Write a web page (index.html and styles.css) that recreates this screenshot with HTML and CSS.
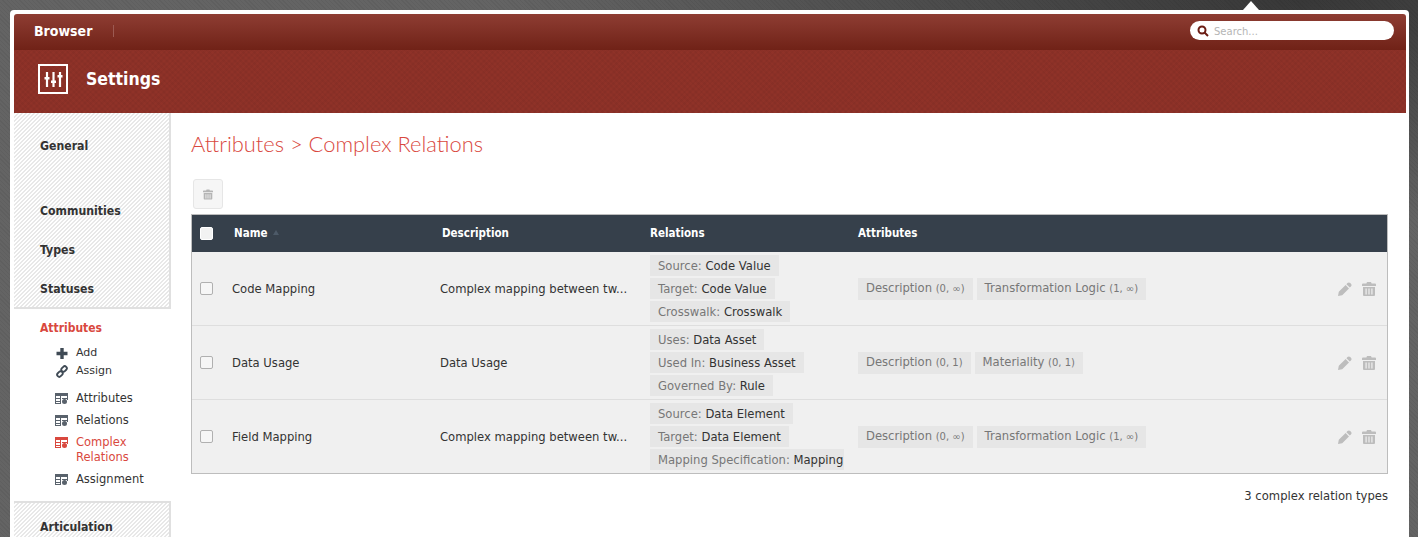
FILE: index.html
```html
<!DOCTYPE html>
<html lang="en">
<head>
<meta charset="utf-8">
<title>Settings</title>
<link rel="stylesheet" href="styles.css">
</head>
<body>
<svg width="0" height="0" class="defs">
  <defs>
    <symbol id="i-trash" viewBox="0 0 14 14"><path d="M5 0h4l.6 1.500H13a1 1 0 0 1 1 1V4H0V2.500a1 1 0 0 1 1-1h3.400zM1 5h12v8a1 1 0 0 1-1 1H2a1 1 0 0 1-1-1zm2.500 1.500v6h1.200v-6zm2.900 0v6h1.200v-6zm2.900 0v6h1.200v-6z"/></symbol>
    <symbol id="i-pencil" viewBox="0 0 14 14"><path d="M0 14l.8-4.200L7.600 3l3.400 3.400L4.200 13.200zM8.400 2.200l1.100-1.100a2 2 0 0 1 2.800 0l.6.600a2 2 0 0 1 0 2.800l-1.100 1.100z"/></symbol>
    <symbol id="i-table" viewBox="0 0 13 11"><path d="M0 0h13v3H0zM0 3h1v8H0zM12 3h1v4h-1zM1 5h4v1H1zM1 8h4v1H1zM1 10h5v1H1zM5 3h1v8H5z"/><path d="M7 5h5v1H7z"/><circle cx="9.500" cy="8.500" r="2.500"/></symbol>
  </defs>
</svg>
<div class="arrow"></div>
<div class="window">
  <header class="topbar">
    <span class="brand">Browser</span>
    <span class="sep"></span>
    <div class="search">
      <svg class="search-icon" viewBox="0 0 12 12"><circle cx="5" cy="5" r="3.500"/><path d="M7.500 7.500L11 11"/></svg>
      <span class="placeholder">Search...</span>
    </div>
  </header>
  <div class="titlebar">
    <div class="logo">
      <svg viewBox="0 0 30 30" width="30" height="30"><rect x="1" y="1" width="28" height="28" class="logo-frame"/><path class="logo-lines" d="M9 8v15M15.500 8v15M22 8v15"/><path class="logo-knobs" d="M6.500 13h5v2.500h-5zM13 16.500h5V19h-5zM19.500 11h5v2.500h-5z"/></svg>
    </div>
    <h1>Settings</h1>
  </div>
  <div class="content">
    <aside class="sidebar">
      <div class="hatched first">
        <a class="sec sec-general">General</a>
        <a class="sec">Communities</a>
        <a class="sec">Types</a>
        <a class="sec">Statuses</a>
      </div>
      <div class="open">
        <a class="sec active">Attributes</a>
        <ul class="actions">
          <li><svg class="act-ic" viewBox="0 0 11 11" width="11" height="11"><path d="M3.800 0h3.400v3.800H11v3.400H7.200V11H3.800V7.200H0V3.800h3.800z"/></svg>Add</li>
          <li><svg class="act-ic chain" viewBox="0 0 13 13" width="13" height="13"><rect x="5.500" y="1.500" width="6.500" height="4.500" rx="2.200" transform="rotate(-45 8.750 3.750)"/><rect x="1" y="7" width="6.500" height="4.500" rx="2.200" transform="rotate(-45 4.250 9.250)"/></svg>Assign</li>
        </ul>
        <ul class="views">
          <li><svg class="tbl"><use href="#i-table"/></svg><span>Attributes</span></li>
          <li><svg class="tbl"><use href="#i-table"/></svg><span>Relations</span></li>
          <li class="cur"><svg class="tbl"><use href="#i-table"/></svg><span>Complex Relations</span></li>
          <li><svg class="tbl"><use href="#i-table"/></svg><span>Assignment</span></li>
        </ul>
      </div>
      <div class="hatched last">
        <a class="sec">Articulation</a>
      </div>
    </aside>
    <main class="main">
      <h2>Attributes &gt; Complex Relations</h2>
      <button class="tool"><svg class="ic"><use href="#i-trash"/></svg></button>
      <table>
        <colgroup>
          <col class="c-check"><col class="c-name"><col class="c-desc"><col class="c-rel"><col class="c-attr"><col class="c-act">
        </colgroup>
        <thead>
          <tr>
            <th class="th-check"><span class="check head"></span></th>
            <th><span class="th-name">Name</span><span class="sort"></span></th>
            <th>Description</th>
            <th>Relations</th>
            <th>Attributes</th>
            <th></th>
          </tr>
        </thead>
        <tbody>
          <tr>
            <td><span class="check"></span></td>
            <td>Code Mapping</td>
            <td>Complex mapping between tw...</td>
            <td class="tags">
              <span class="tag"><i>Source:</i> Code Value</span>
              <span class="tag"><i>Target:</i> Code Value</span>
              <span class="tag"><i>Crosswalk:</i> Crosswalk</span>
            </td>
            <td class="attrs">
              <span class="tag a"><i>Description</i> <small>(0, ∞)</small></span>
              <span class="tag a"><i>Transformation Logic</i> <small>(1, ∞)</small></span>
            </td>
            <td class="acts"><svg class="ic"><use href="#i-pencil"/></svg><svg class="ic"><use href="#i-trash"/></svg></td>
          </tr>
          <tr>
            <td><span class="check"></span></td>
            <td>Data Usage</td>
            <td>Data Usage</td>
            <td class="tags">
              <span class="tag"><i>Uses:</i> Data Asset</span>
              <span class="tag"><i>Used In:</i> Business Asset</span>
              <span class="tag"><i>Governed By:</i> Rule</span>
            </td>
            <td class="attrs">
              <span class="tag a"><i>Description</i> <small>(0, 1)</small></span>
              <span class="tag a"><i>Materiality</i> <small>(0, 1)</small></span>
            </td>
            <td class="acts"><svg class="ic"><use href="#i-pencil"/></svg><svg class="ic"><use href="#i-trash"/></svg></td>
          </tr>
          <tr>
            <td><span class="check"></span></td>
            <td>Field Mapping</td>
            <td>Complex mapping between tw...</td>
            <td class="tags">
              <span class="tag"><i>Source:</i> Data Element</span>
              <span class="tag"><i>Target:</i> Data Element</span>
              <span class="tag"><i>Mapping Specification:</i> Mapping</span>
            </td>
            <td class="attrs">
              <span class="tag a"><i>Description</i> <small>(0, ∞)</small></span>
              <span class="tag a"><i>Transformation Logic</i> <small>(1, ∞)</small></span>
            </td>
            <td class="acts"><svg class="ic"><use href="#i-pencil"/></svg><svg class="ic"><use href="#i-trash"/></svg></td>
          </tr>
        </tbody>
      </table>
      <p class="count">3 complex relation types</p>
    </main>
  </div>
</div>
</body>
</html>
```
FILE: styles.css
```css
* { box-sizing: border-box; }
html, body { height: 100%; }
body {
  margin: 0;
  height: 537px;
  overflow: hidden;
  padding: 10px 9px 0 10px;
  font-family: "DejaVu Sans", sans-serif;
  font-size: 11.6px;
  color: #333;
  background:
    repeating-linear-gradient(45deg, rgba(0,0,0,.05) 0 1px, transparent 1px 3px),
    radial-gradient(ellipse 800px 220px at 1300px 0, #383838, rgba(56,56,56,0)),
    #646464;
  position: relative;
}
.defs { position: absolute; }
.arrow {
  position: absolute;
  left: 1243px;
  top: 1px;
  width: 0;
  height: 0;
  border: 8px solid transparent;
  border-top: 0;
  border-bottom: 9px solid #fff;
}
.window {
  background: #fff;
  border-radius: 4px 4px 0 0;
  padding: 4px 3px 0 4px;
  height: 527px;
  overflow: hidden;
}
.topbar {
  height: 36px;
  display: flex;
  align-items: center;
  padding: 0 12px 3px 20px;
  border-radius: 3px 3px 0 0;
  background: linear-gradient(#8e3d33, #702217);
}
.brand, h1, .sec, thead th {
  font-family: "DejaVu Sans Condensed", "DejaVu Sans", sans-serif;
  font-stretch: condensed;
  font-weight: 700;
}
.brand { color: #fff; font-size: 14px; }
.sep { width: 1px; height: 12px; margin-left: 21px; background: #9c5a52; }
.search {
  margin-left: auto;
  width: 204px;
  height: 19px;
  border-radius: 10px;
  background: #fff;
  display: flex;
  align-items: center;
  padding-left: 7px;
  gap: 5px;
  font-size: 10px;
  color: #b5b5b5;
}
.placeholder { padding-top: 1px; }
.search-icon { width: 12px; height: 12px; fill: none; stroke: #6b1d14; stroke-width: 2; }
.titlebar {
  height: 63px;
  display: flex;
  align-items: center;
  padding: 0 0 6px 24px;
  gap: 18px;
  background: #8f3228;
  background-image: repeating-linear-gradient(45deg, rgba(0,0,0,.03) 0 2px, transparent 2px 4px), repeating-linear-gradient(-45deg, rgba(0,0,0,.03) 0 2px, transparent 2px 4px);
}
.logo { width: 30px; height: 30px; }
.logo-frame { fill: none; stroke: #fff; stroke-width: 2; }
.logo-lines { stroke: #fff; stroke-width: 2.200; fill: none; }
.logo-knobs { fill: #fff; }
h1 { margin: 0; color: #fff; font-size: 17.500px; }
.content { display: flex; }
.sidebar { width: 157px; flex: none; }
.hatched {
  background-color: #fff;
  background-image: repeating-linear-gradient(135deg, #e8e8e8 0 1.200px, #fff 1.200px 2.8284px);
  border-right: 2px solid #e0e0e0;
}
.hatched.first { height: 196px; border-bottom: 2px solid #e0e0e0; padding-top: 20px; }
.hatched.last { height: 60px; border-top: 2px solid #e0e0e0; padding-top: 11px; }
.sec { display: block; height: 39px; padding: 6px 0 0 26px; color: #333; font-size: 12.200px; }
.sec-general { height: 65px; }
.open { height: 192px; }
.sec.active { color: #d9483e; height: 28px; padding-top: 12px; font-size: 12px; }
ul { list-style: none; margin: 0; }
.actions { padding: 7px 0 0 42px; }
.actions li { height: 18px; line-height: 18px; font-size: 11px; display: flex; align-items: center; }
.act-ic { margin-right: 8px; width: 12px; fill: #3f4a55; flex: none; }
.chain { fill: none; stroke: #3f4a55; stroke-width: 2; }
.views { padding: 11px 0 0 41px; }
.views li { display: flex; font-size: 11.500px; line-height: 15px; margin-bottom: 7px; color: #333; }
.views li span { width: 68px; }
.tbl { width: 13px; height: 11px; margin: 2px 8px 0 0; flex: none; fill: #59626c; }
.views li.cur { color: #d9483e; }
.views li.cur .tbl { fill: #d9483e; }
.main { flex: 1; padding: 0 18px 0 20px; min-width: 0; }
h2 {
  margin: 0;
  padding-top: 18px;
  height: 66px;
  font: 300 21.900px/26px "Lato", sans-serif;
  color: #d9483e;
}
.tool {
  display: block;
  margin-left: 2px;
  width: 30px;
  height: 30px;
  padding: 0;
  border: 1px solid #e6e6e6;
  border-radius: 3px;
  background: #f6f6f6;
  fill: #b5b5b5;
}
.tool .ic { width: 10px; height: 11px; display: block; margin: auto; }
table {
  margin-top: 5px;
  width: 1197px;
  table-layout: fixed;
  border-collapse: separate;
  border-spacing: 0;
  border: 1px solid #bdbdbd;
}
.c-check { width: 40px; }
.c-name { width: 208px; }
.c-desc { width: 208px; }
.c-rel { width: 208px; }
.c-attr { width: 430px; }
thead th {
  height: 37px;
  background: #36404b;
  color: #fff;
  text-align: left;
  font-size: 11.500px;
  padding: 0 0 2px 2px;
}
thead th.th-check { padding: 0; }
.sort {
  display: inline-block;
  margin-left: 6px;
  vertical-align: 2px;
  border: 3px solid transparent;
  border-top: 0;
  border-bottom: 5px solid #4d5a68;
}
tbody td {
  height: 74px;
  background: #f0f0f0;
  border-top: 1px solid #dedede;
  padding: 0;
  vertical-align: middle;
  white-space: nowrap;
  overflow: visible;
}
tbody tr:first-child td { border-top: 0; height: 73px; }
.check {
  display: block;
  margin-left: 8px;
  width: 13px;
  height: 13px;
  border: 1px solid #b0b0b0;
  border-radius: 2px;
  background: #f6f6f6;
}
.check.head { background: #f2f2f2; border-color: #fff; }
tbody td.tags { vertical-align: top; padding: 3px 0 0 2px; }
.tag {
  display: block;
  width: fit-content;
  max-width: 194px;
  height: 21px;
  line-height: 22px;
  padding: 0 8px;
  margin: 0 0 2px;
  background: #e6e6e6;
  color: #333;
}
.tag i { font-style: normal; color: #777; }
.tag small { font-size: 10px; color: #777; }
tbody td.attrs { font-size: 0; padding-left: 2px; }
.tag.a { display: inline-block; width: auto; max-width: none; font-size: 11.600px; margin: 0 4px 0 0; height: 22px; line-height: 21px; }
tbody td.acts { text-align: right; padding-right: 11px; fill: #bdbdbd; }
.acts .ic { width: 14px; height: 14px; margin-left: 10px; vertical-align: middle; }
.count { margin: 15px 0 0; text-align: right; color: #333; }
```
